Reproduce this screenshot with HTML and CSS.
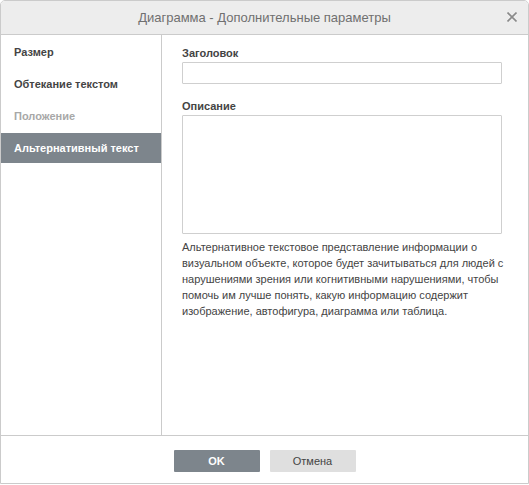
FILE: index.html
```html
<!DOCTYPE html>
<html lang="ru">
<head>
    <meta charset="UTF-8">
    <title>Диаграмма - Дополнительные параметры</title>
    <link rel="stylesheet" href="styles.css">
</head>
<body>
    <div class="dialog">
        <div class="dialog-header">
            <span class="dialog-title">Диаграмма - Дополнительные параметры</span>
            <span class="dialog-close">
                <svg width="10" height="10" viewBox="0 0 10 10"><path d="M0.5 0.5 L9.5 9.5 M9.5 0.5 L0.5 9.5" stroke="#8a8a8a" stroke-width="1.6" fill="none"/></svg>
            </span>
        </div>
        <div class="dialog-body">
            <div class="side-menu">
                <div class="menu-item">Размер</div>
                <div class="menu-item">Обтекание текстом</div>
                <div class="menu-item disabled">Положение</div>
                <div class="menu-item active">Альтернативный текст</div>
            </div>
            <div class="panel">
                <label class="field-label" for="alt-title">Заголовок</label>
                <input type="text" id="alt-title" class="text-input">
                <label class="field-label second" for="alt-descr">Описание</label>
                <textarea id="alt-descr" class="text-area"></textarea>
                <div class="hint">Альтернативное текстовое представление информации о визуальном объекте, которое будет зачитываться для людей с нарушениями зрения или когнитивными нарушениями, чтобы помочь им лучше понять, какую информацию содержит изображение, автофигура, диаграмма или таблица.</div>
            </div>
        </div>
        <div class="dialog-footer">
            <button type="button" class="btn primary">OK</button>
            <button type="button" class="btn">Отмена</button>
        </div>
    </div>
</body>
</html>
```

FILE: styles.css
```css
html, body { margin: 0; padding: 0; background: #fff; }
body { font-family: "Liberation Sans", Arial, sans-serif; font-size: 11px; color: #444; }
.dialog { width: 529px; height: 484px; box-sizing: border-box; border: 1px solid #cbcbcb; border-radius: 5px 5px 0 0; display: flex; flex-direction: column; overflow: hidden; }
.dialog-header { height: 33px; flex: none; background: #ededed; border-bottom: 1px solid #cbcbcb; display: flex; align-items: center; justify-content: center; position: relative; }
.dialog-title { font-size: 13px; color: #707070; }
.dialog-close { position: absolute; right: 11px; top: 11px; width: 10px; height: 10px; line-height: 0; }
.dialog-body { flex: 1; display: flex; border-bottom: 1px solid #cbcbcb; }
.side-menu { width: 160px; border-right: 1px solid #cbcbcb; padding-top: 2px; }
.menu-item { height: 30px; line-height: 30px; margin-bottom: 2px; padding-left: 13px; font-weight: bold; color: #444; }
.menu-item.disabled { color: #a8a8a8; }
.menu-item.active { background: #7d858c; color: #fff; }
.panel { flex: 1; padding: 12px 0 0 20px; }
.field-label { display: block; font-weight: bold; height: 15px; margin-bottom: 0; }
.field-label.second { margin-top: 16px; }
.text-input { display: block; width: 320px; height: 22px; box-sizing: border-box; border: 1px solid #cfcfcf; border-radius: 1px; margin: 0; padding: 0 4px; }
.text-area { display: block; width: 320px; height: 119px; box-sizing: border-box; border: 1px solid #cfcfcf; border-radius: 1px; margin: 0; resize: none; }
.hint { width: 325px; margin-top: 5px; line-height: 16px; }
.dialog-footer { height: 47px; flex: none; display: flex; justify-content: center; align-items: flex-start; padding-top: 14px; box-sizing: border-box; gap: 10px; }
.btn { width: 86px; height: 22px; border: none; border-radius: 1px; padding: 0; background: #dfdfdf; color: #444; font-family: "Liberation Sans", Arial, sans-serif; font-size: 11px; cursor: pointer; }
.btn.primary { background: #7d858c; color: #fff; font-weight: bold; }
```
